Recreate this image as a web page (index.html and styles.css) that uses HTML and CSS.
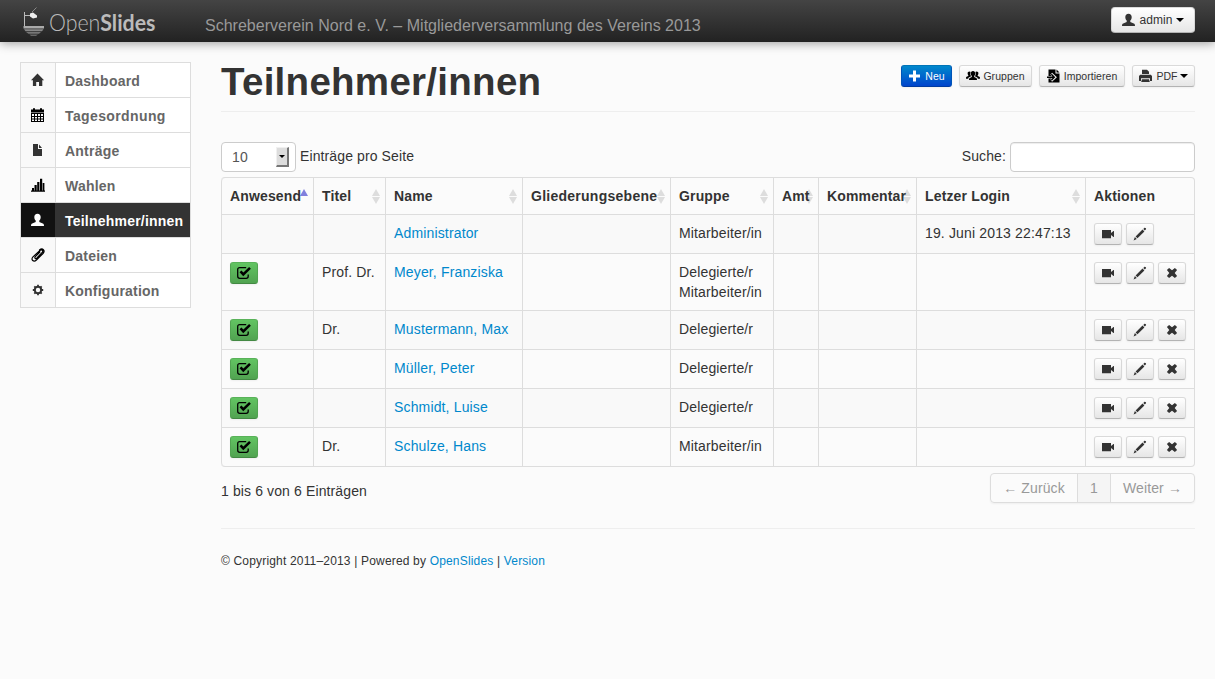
FILE: index.html
```html
<!DOCTYPE html>
<html lang="de">
<head>
<meta charset="utf-8">
<title>Teilnehmer/innen</title>
<link rel="stylesheet" href="styles.css">
</head>
<body>
<svg class="sprite" aria-hidden="true">
  <symbol id="home" viewBox="0 0 14 14"><path d="M6.500 .4 13.100 7.200H11.300V13H8V9H5.200V13H1.900V7.200H0Z"/></symbol>
  <symbol id="calendar" viewBox="0 0 14 14"><path d="M0 1.500h2V.3h2v1.200h5V.3h2v1.200h2V4H0Z"/><path d="M0 4h13v1H0Z" fill="#777"/><path fill-rule="evenodd" d="M0 5h13v9H0ZM1 6v2h2V6Zm3 0v2h2V6Zm3 0v2h2V6Zm3 0v2h2V6ZM1 9v1.500h2V9Zm3 0v1.500h2V9Zm3 0v1.500h2V9Zm3 0v1.500h2V9ZM1 11.500v1.500h2v-1.500Zm3 0v1.500h2v-1.500Zm3 0v1.500h2v-1.500Zm3 0v1.500h2v-1.500Z"/></symbol>
  <symbol id="file" viewBox="0 0 14 14"><path d="M2 1h5v5h4v7H2ZM8 1.500l3 3.500H8Z"/></symbol>
  <symbol id="bars" viewBox="0 0 14 14"><path d="M0 13.700V12.400H1V10h2v2.400h.5V7h2.200v5.400h.5V4h2.200v8.400H9V.8h2.200v11.600h.5V5h1.700v7.400h.6v1.300Z"/></symbol>
  <symbol id="user" viewBox="0 0 14 14"><path d="M6.500 .8c2 0 3.200 1.300 3.200 3.300 0 1.700-.7 2.800-1.400 3.500v1.500l3.500 1.300c.8.300 1.200.9 1.200 2.600H0c0-1.700.4-2.300 1.200-2.600l3.500-1.300V7.600C4 6.900 3.300 5.800 3.300 4.100 3.300 2.100 4.500.8 6.500.8Z"/></symbol>
  <symbol id="clip" viewBox="0 0 14 14"><path fill="none" stroke="currentColor" stroke-width="1.200" stroke-linecap="round" d="M8.900 4 4.300 8.700c-1.100 1.200.2 2.500 1.400 1.400L11 4.700c2-2.100-.4-3.900-2.300-2.100L2 8.900c-2.800 2.900.8 5.600 3.400 3.100L12 5.500c2.600-2.800-.4-6.100-3.500-3.500"/></symbol>
  <symbol id="cog" viewBox="0 0 14 14"><g fill="none" stroke="currentColor"><circle cx="7" cy="7" r="3.200" stroke-width="2"/><path stroke-width="1.800" d="M7 1.800v2M7 10.200v2M1.800 7h2M10.200 7h2M3.300 3.300l1.200 1.200M9.500 9.500l1.200 1.200M3.300 10.700l1.200-1.200M9.500 4.500l1.200-1.200"/></g></symbol>
  <symbol id="plus" viewBox="0 0 14 14"><path d="M5 1.500h3v4h4v3H8v4H5v-4H1v-3h4Z"/></symbol>
  <symbol id="group" viewBox="0 0 14 14"><path d="M7 2c1.500 0 2.200 1 2.200 2.300S8.700 6.500 8.200 7v1l2 .9c.6.300.8.900.8 2.100H3c0-1.200.2-1.800.8-2.100l2-.9V7c-.5-.5-1-1.400-1-2.700S5.500 2 7 2ZM3.500 2.500c.5 0 .9.200 1.100.5-.6 1.400-.4 3 .5 4.300l-1.900 1C2.500 8.600 2.200 9 2.200 9.700H0c0-1.200.1-1.600.6-1.900l1.700-.8v-.8c-.4-.4-.7-1-.7-1.900 0-1.100.7-1.800 1.900-1.800ZM10.500 2.500c-.5 0-.9.200-1.100.5.600 1.400.4 3-.5 4.300l1.900 1c.7.300 1 .7 1 1.400H14c0-1.200-.1-1.600-.6-1.900l-1.700-.8v-.8c.4-.4.7-1 .7-1.900 0-1.100-.7-1.800-1.900-1.800Z"/></symbol>
  <symbol id="import" viewBox="0 0 14 14"><path d="M1.500 .5H8.500v4H12.500v9H1.500Z"/><path d="M9.500 .5l3 3h-3Z"/><path fill="none" stroke="#eee" stroke-width="2.600" d="M0 8.200h5M4.200 4.700 8 8.200l-3.800 3.500"/><path fill="none" stroke="currentColor" stroke-width="1.400" d="M0 8.200h7M4.300 5.200 7.300 8.200l-3 3"/></symbol>
  <symbol id="print" viewBox="0 0 14 14"><path fill-rule="evenodd" d="M3 .8h5l2 1.900V5H3ZM1.200 5.800h10.600L13 7v5h-2V9.300H2V12H0V7ZM3 10.300h7l.8 2.700H2.200Z"/></symbol>
  <symbol id="check" viewBox="0 0 14 14"><path fill="none" stroke="currentColor" stroke-width="1.300" d="M9.200 1.700H2.800C1.300 1.700.7 2.200.7 3.700v6.600c0 1.500.6 2 2.100 2h6.400c1.500 0 2-.5 2-2V8.500"/><path fill="none" stroke="currentColor" stroke-width="2.600" d="M3.500 5.400 6.300 8.400 13 1.900"/></symbol>
  <symbol id="video" viewBox="0 0 14 14"><path d="M1 3h9v3L12.500 4H13v6h-.5L10 8v3.200H1Z"/></symbol>
  <symbol id="pencil" viewBox="0 0 14 14"><path d="M10.300 1.900 11.500.8c.7-.5 2 .8 1.500 1.500l-1.200 1.200ZM9.500 2.500 11.400 4.400 4.500 11.300 2.600 9.400ZM1.900 10.100l1.900 1.900L.6 13.400Z"/></symbol>
  <symbol id="remove" viewBox="0 0 14 14"><path d="M4.100 1.900 7 4.300l2.900-2.400 2.200 2.200L9.700 7l2.400 2.900-2.200 2.200L7 9.700l-2.900 2.400-2.200-2.200L4.300 7 1.900 4.100Z"/></symbol>
</svg>

<header class="navbar">
  <svg class="logo" width="150" height="42" viewBox="0 0 150 42">
    <path d="M4.500 12v14M4 15.500h7" stroke="#bbb" fill="none"/>
    <path d="M10 13.500l3-1 4 3v2l-4 1-3-2Z" fill="#eee"/><path d="m12 12 4.500-4.500" stroke="#888" fill="none"/>
    <path d="M3.500 26h20.500v2.500H3.500Z" fill="#aaa"/><path d="M4 29.300h19.500l-1.500 2h-16.500Z" fill="#888"/><path d="M6 32h15l-2 1.800H8.500Z" fill="#777"/><path d="M9.500 34.500h8.500l-2 1.500h-5Z" fill="#666"/>
    <text class="logo-text" x="29" y="31" textLength="106.500" lengthAdjust="spacingAndGlyphs">Open<tspan class="logo-bold">Slides</tspan></text>
  </svg>
  <span class="event">Schreberverein Nord e. V. – Mitgliederversammlung des Vereins 2013</span>
  <a class="btn user-btn"><svg class="ico"><use href="#user"/></svg><span>admin</span><i class="caret"></i></a>
</header>

<div class="page">
  <nav class="side">
    <a class="item"><b><svg class="ico"><use href="#home"/></svg></b><span>Dashboard</span></a>
    <a class="item"><b class="black"><svg class="ico"><use href="#calendar"/></svg></b><span class="wide">Tagesordnung</span></a>
    <a class="item"><b><svg class="ico"><use href="#file"/></svg></b><span>Anträge</span></a>
    <a class="item"><b class="black"><svg class="ico"><use href="#bars"/></svg></b><span>Wahlen</span></a>
    <a class="item active"><b><svg class="ico"><use href="#user"/></svg></b><span>Teilnehmer/innen</span></a>
    <a class="item"><b class="black"><svg class="ico"><use href="#clip"/></svg></b><span>Dateien</span></a>
    <a class="item"><b><svg class="ico"><use href="#cog"/></svg></b><span>Konfiguration</span></a>
  </nav>

  <main class="main">
    <div class="head">
      <h1>Teilnehmer/innen</h1>
      <div class="tools">
        <a class="btn mini primary w-new"><svg class="ico"><use href="#plus"/></svg><span>Neu</span></a>
        <a class="btn mini w-groups"><svg class="ico black"><use href="#group"/></svg><span>Gruppen</span></a>
        <a class="btn mini w-import"><svg class="ico black"><use href="#import"/></svg><span>Importieren</span></a>
        <a class="btn mini w-pdf"><svg class="ico"><use href="#print"/></svg><span>PDF</span><i class="caret"></i></a>
      </div>
    </div>

    <div class="filter">
      <div class="select"><span>10</span><i class="drop"></i></div>
      <label class="per-page">Einträge pro Seite</label>
      <label class="search">Suche:</label>
      <input type="text" aria-label="Suche">
    </div>

    <table>
      <colgroup><col class="c1"><col class="c2"><col class="c3"><col class="c4"><col class="c5"><col class="c6"><col class="c7"><col class="c8"><col class="c9"></colgroup>
      <thead><tr>
        <th class="asc"><span>Anwesend</span></th><th class="sort"><span>Titel</span></th><th class="sort"><span>Name</span></th><th class="sort"><span class="wide">Gliederungsebene</span></th><th class="sort"><span>Gruppe</span></th><th class="sort"><span>Amt</span></th><th class="sort"><span>Kommentar</span></th><th class="sort"><span>Letzer Login</span></th><th><span>Aktionen</span></th>
      </tr></thead>
      <tbody>
        <tr><td></td><td></td><td><a>Administrator</a></td><td></td><td>Mitarbeiter/in</td><td></td><td></td><td>19. Juni 2013 22:47:13</td>
          <td><div class="acts"><a class="btn sq"><svg class="ico"><use href="#video"/></svg></a><a class="btn sq"><svg class="ico"><use href="#pencil"/></svg></a></div></td></tr>
        <tr class="tall"><td><a class="btn sq ok"><svg class="ico"><use href="#check"/></svg></a></td><td>Prof. Dr.</td><td><a>Meyer, Franziska</a></td><td></td><td>Delegierte/r<br>Mitarbeiter/in</td><td></td><td></td><td></td>
          <td><div class="acts"><a class="btn sq"><svg class="ico"><use href="#video"/></svg></a><a class="btn sq"><svg class="ico"><use href="#pencil"/></svg></a><a class="btn sq"><svg class="ico"><use href="#remove"/></svg></a></div></td></tr>
        <tr><td><a class="btn sq ok"><svg class="ico"><use href="#check"/></svg></a></td><td>Dr.</td><td><a>Mustermann, Max</a></td><td></td><td>Delegierte/r</td><td></td><td></td><td></td>
          <td><div class="acts"><a class="btn sq"><svg class="ico"><use href="#video"/></svg></a><a class="btn sq"><svg class="ico"><use href="#pencil"/></svg></a><a class="btn sq"><svg class="ico"><use href="#remove"/></svg></a></div></td></tr>
        <tr><td><a class="btn sq ok"><svg class="ico"><use href="#check"/></svg></a></td><td></td><td><a>Müller, Peter</a></td><td></td><td>Delegierte/r</td><td></td><td></td><td></td>
          <td><div class="acts"><a class="btn sq"><svg class="ico"><use href="#video"/></svg></a><a class="btn sq"><svg class="ico"><use href="#pencil"/></svg></a><a class="btn sq"><svg class="ico"><use href="#remove"/></svg></a></div></td></tr>
        <tr><td><a class="btn sq ok"><svg class="ico"><use href="#check"/></svg></a></td><td></td><td><a>Schmidt, Luise</a></td><td></td><td>Delegierte/r</td><td></td><td></td><td></td>
          <td><div class="acts"><a class="btn sq"><svg class="ico"><use href="#video"/></svg></a><a class="btn sq"><svg class="ico"><use href="#pencil"/></svg></a><a class="btn sq"><svg class="ico"><use href="#remove"/></svg></a></div></td></tr>
        <tr><td><a class="btn sq ok"><svg class="ico"><use href="#check"/></svg></a></td><td>Dr.</td><td><a>Schulze, Hans</a></td><td></td><td>Mitarbeiter/in</td><td></td><td></td><td></td>
          <td><div class="acts"><a class="btn sq"><svg class="ico"><use href="#video"/></svg></a><a class="btn sq"><svg class="ico"><use href="#pencil"/></svg></a><a class="btn sq"><svg class="ico"><use href="#remove"/></svg></a></div></td></tr>
      </tbody>
    </table>

    <div class="below">
      <span class="info">1 bis 6 von 6 Einträgen</span>
      <div class="pager"><span class="prev">← Zurück</span><span class="cur">1</span><span class="next">Weiter →</span></div>
    </div>
    <footer>© Copyright 2011–2013 | Powered by <a>OpenSlides</a> | <a>Version</a></footer>
  </main>
</div>
</body>
</html>
```
FILE: styles.css
```css
* { box-sizing: border-box; }
body { margin: 0; background: #fbfbfb; color: #333; font: 14px/20px "Liberation Sans", Arial, sans-serif; overflow: hidden; }
.sprite { position: absolute; width: 0; height: 0; }
.ico { width: 14px; height: 14px; fill: currentColor; flex: none; display: block; }
.black { color: #000; }
a { color: #08c; text-decoration: none; }

.navbar { height: 42px; display: flex; align-items: flex-start; padding: 0 20px; background: linear-gradient(#444, #222); box-shadow: 0 1px 10px rgba(0,0,0,.4); }
.logo { flex: none; margin-right: 35px; }
.logo-text { font-family: Lato, sans-serif; font-size: 23.5px; fill: #bbb; font-weight: 300; }
.logo-bold { font-weight: 700; }
.event { flex: 1; font-size: 16px; line-height: 20px; padding-top: 16px; color: #999; white-space: nowrap; letter-spacing: .015px; }

.btn { display: inline-flex; align-items: center; justify-content: center; color: #333; border: 1px solid #ccc; border-color: #dadada #d8d8d8 #b3b3b3; border-radius: 3px; background: linear-gradient(#fff, #e6e6e6); box-shadow: 0 1px 2px rgba(0,0,0,.05); white-space: nowrap; }
.user-btn { width: 84px; height: 26px; margin-top: 7px; font-size: 12px; gap: 3px; border-radius: 4px; letter-spacing: .1px; }
.caret { width: 0; height: 0; border: 4px solid transparent; border-top-color: #000; border-bottom: 0; }

.page { display: flex; gap: 30px; padding: 20px 20px 0; }
.side { width: 171px; flex: none; height: 246px; border: 1px solid #ddd; border-bottom: 0; font-weight: bold; }
.item { display: flex; height: 35px; border-bottom: 1px solid #ddd; background: #fff; color: #666; }
.item b { width: 35px; flex: none; background: #f9f9f9; border-right: 1px solid #ddd; color: #333; padding: 10px; }
.item b.black { color: #000; }
.item span { padding: 8px 0 0 9px; letter-spacing: .22px; white-space: nowrap; }
.item span.wide { letter-spacing: .38px; }
.item.active, .item.active b { background: #333; color: #fff; }
.item.active b { background: #111; border-color: #333; }

.main { flex: 1; min-width: 0; }
.head { display: flex; justify-content: space-between; height: 50px; border-bottom: 1px solid #eee; }
h1 { margin: 0; font-size: 38.5px; line-height: 40px; letter-spacing: .28px; }
.tools { display: flex; gap: 7px; padding-top: 3px; }
.mini { height: 22px; font-size: 10.5px; gap: 3px; letter-spacing: .05px; }
.mini .caret { margin-left: -1px; }
.primary { color: #fff; background: linear-gradient(#08c, #04c); border-color: #0074b8 #0055b8 #003ba0; }
.w-new { width: 51px; } .w-groups { width: 73px; } .w-import { width: 86px; } .w-pdf { width: 63px; }

.filter { display: flex; margin-top: 30px; height: 35px; letter-spacing: .11px; }
.select { width: 75px; height: 30px; border: 1px solid #ccc; border-radius: 4px; background: #fff; color: #555; display: flex; justify-content: space-between; padding: 4px 6px 4px 10px; }
.drop { width: 13px; height: 20px; background: #ddd; border: 1px solid; border-color: #f0f0f0 #777 #777 #f0f0f0; border-width: 1px 2px 2px 1px; display: flex; align-items: center; justify-content: center; }
.drop::after { content: ""; border: 3px solid transparent; border-top-color: #000; border-bottom: 0; }
.per-page { padding: 4px 0 0 4px; }
.search { margin-left: auto; padding: 4px 4px 0 0; }
input { width: 185px; height: 30px; border: 1px solid #ccc; border-radius: 4px; background: #fff; box-shadow: inset 0 1px 1px rgba(0,0,0,.075); }

table { width: 974px; table-layout: fixed; border: 1px solid #ddd; border-left: 0; border-radius: 4px; border-spacing: 0; border-collapse: separate; letter-spacing: .15px; }
.c1 { width: 92px; } .c2 { width: 72px; } .c3 { width: 137px; } .c4 { width: 148px; } .c5 { width: 103px; } .c6 { width: 45px; } .c7 { width: 98px; } .c8 { width: 169px; } .c9 { width: 109px; }
th, td { text-align: left; vertical-align: top; border-left: 1px solid #ddd; padding: 8px 0 0 8px; white-space: nowrap; }
th { height: 36px; position: relative; }
th span { position: relative; z-index: 1; }
th .wide { letter-spacing: .26px; }
td { height: 39px; border-top: 1px solid #ddd; }
.tall td { height: 57px; }
tbody tr:nth-child(odd) td { background: #f9f9f9; }
th:first-child { border-top-left-radius: 4px; }
tr:last-child td:first-child { border-bottom-left-radius: 4px; }
.sort::before, .sort::after, .asc::after { content: ""; position: absolute; right: 5px; border: 4px solid transparent; }
.sort::before { top: 11px; border-top: 0; border-bottom: 7px solid #ddd; }
.sort::after { top: 19px; border-bottom: 0; border-top: 7px solid #ddd; }
.asc::after { top: 11px; border-top: 0; border-bottom: 7px solid #8080dd; }
.sq { width: 28px; height: 22px; }
td > .sq { display: flex; }
.ok { color: #000; background: linear-gradient(#62c462, #51a351); border-color: #59b259 #52a452 #438943; }
.acts { display: flex; gap: 4px; }

.below { display: flex; justify-content: space-between; height: 62px; padding-top: 6px; border-bottom: 1px solid #eee; letter-spacing: .12px; }
.info { padding-top: 8px; }
.pager { display: flex; width: 205px; height: 30px; border: 1px solid #ddd; border-radius: 4px; color: #999; line-height: 28px; text-align: center; box-shadow: 0 1px 2px rgba(0,0,0,.05); }
.prev { width: 86px; } .next { flex: 1; }
.cur { width: 34px; background: #f5f5f5; border: solid #ddd; border-width: 0 1px; }
footer { padding-top: 22px; font-size: 12px; white-space: nowrap; letter-spacing: .175px; }
```
